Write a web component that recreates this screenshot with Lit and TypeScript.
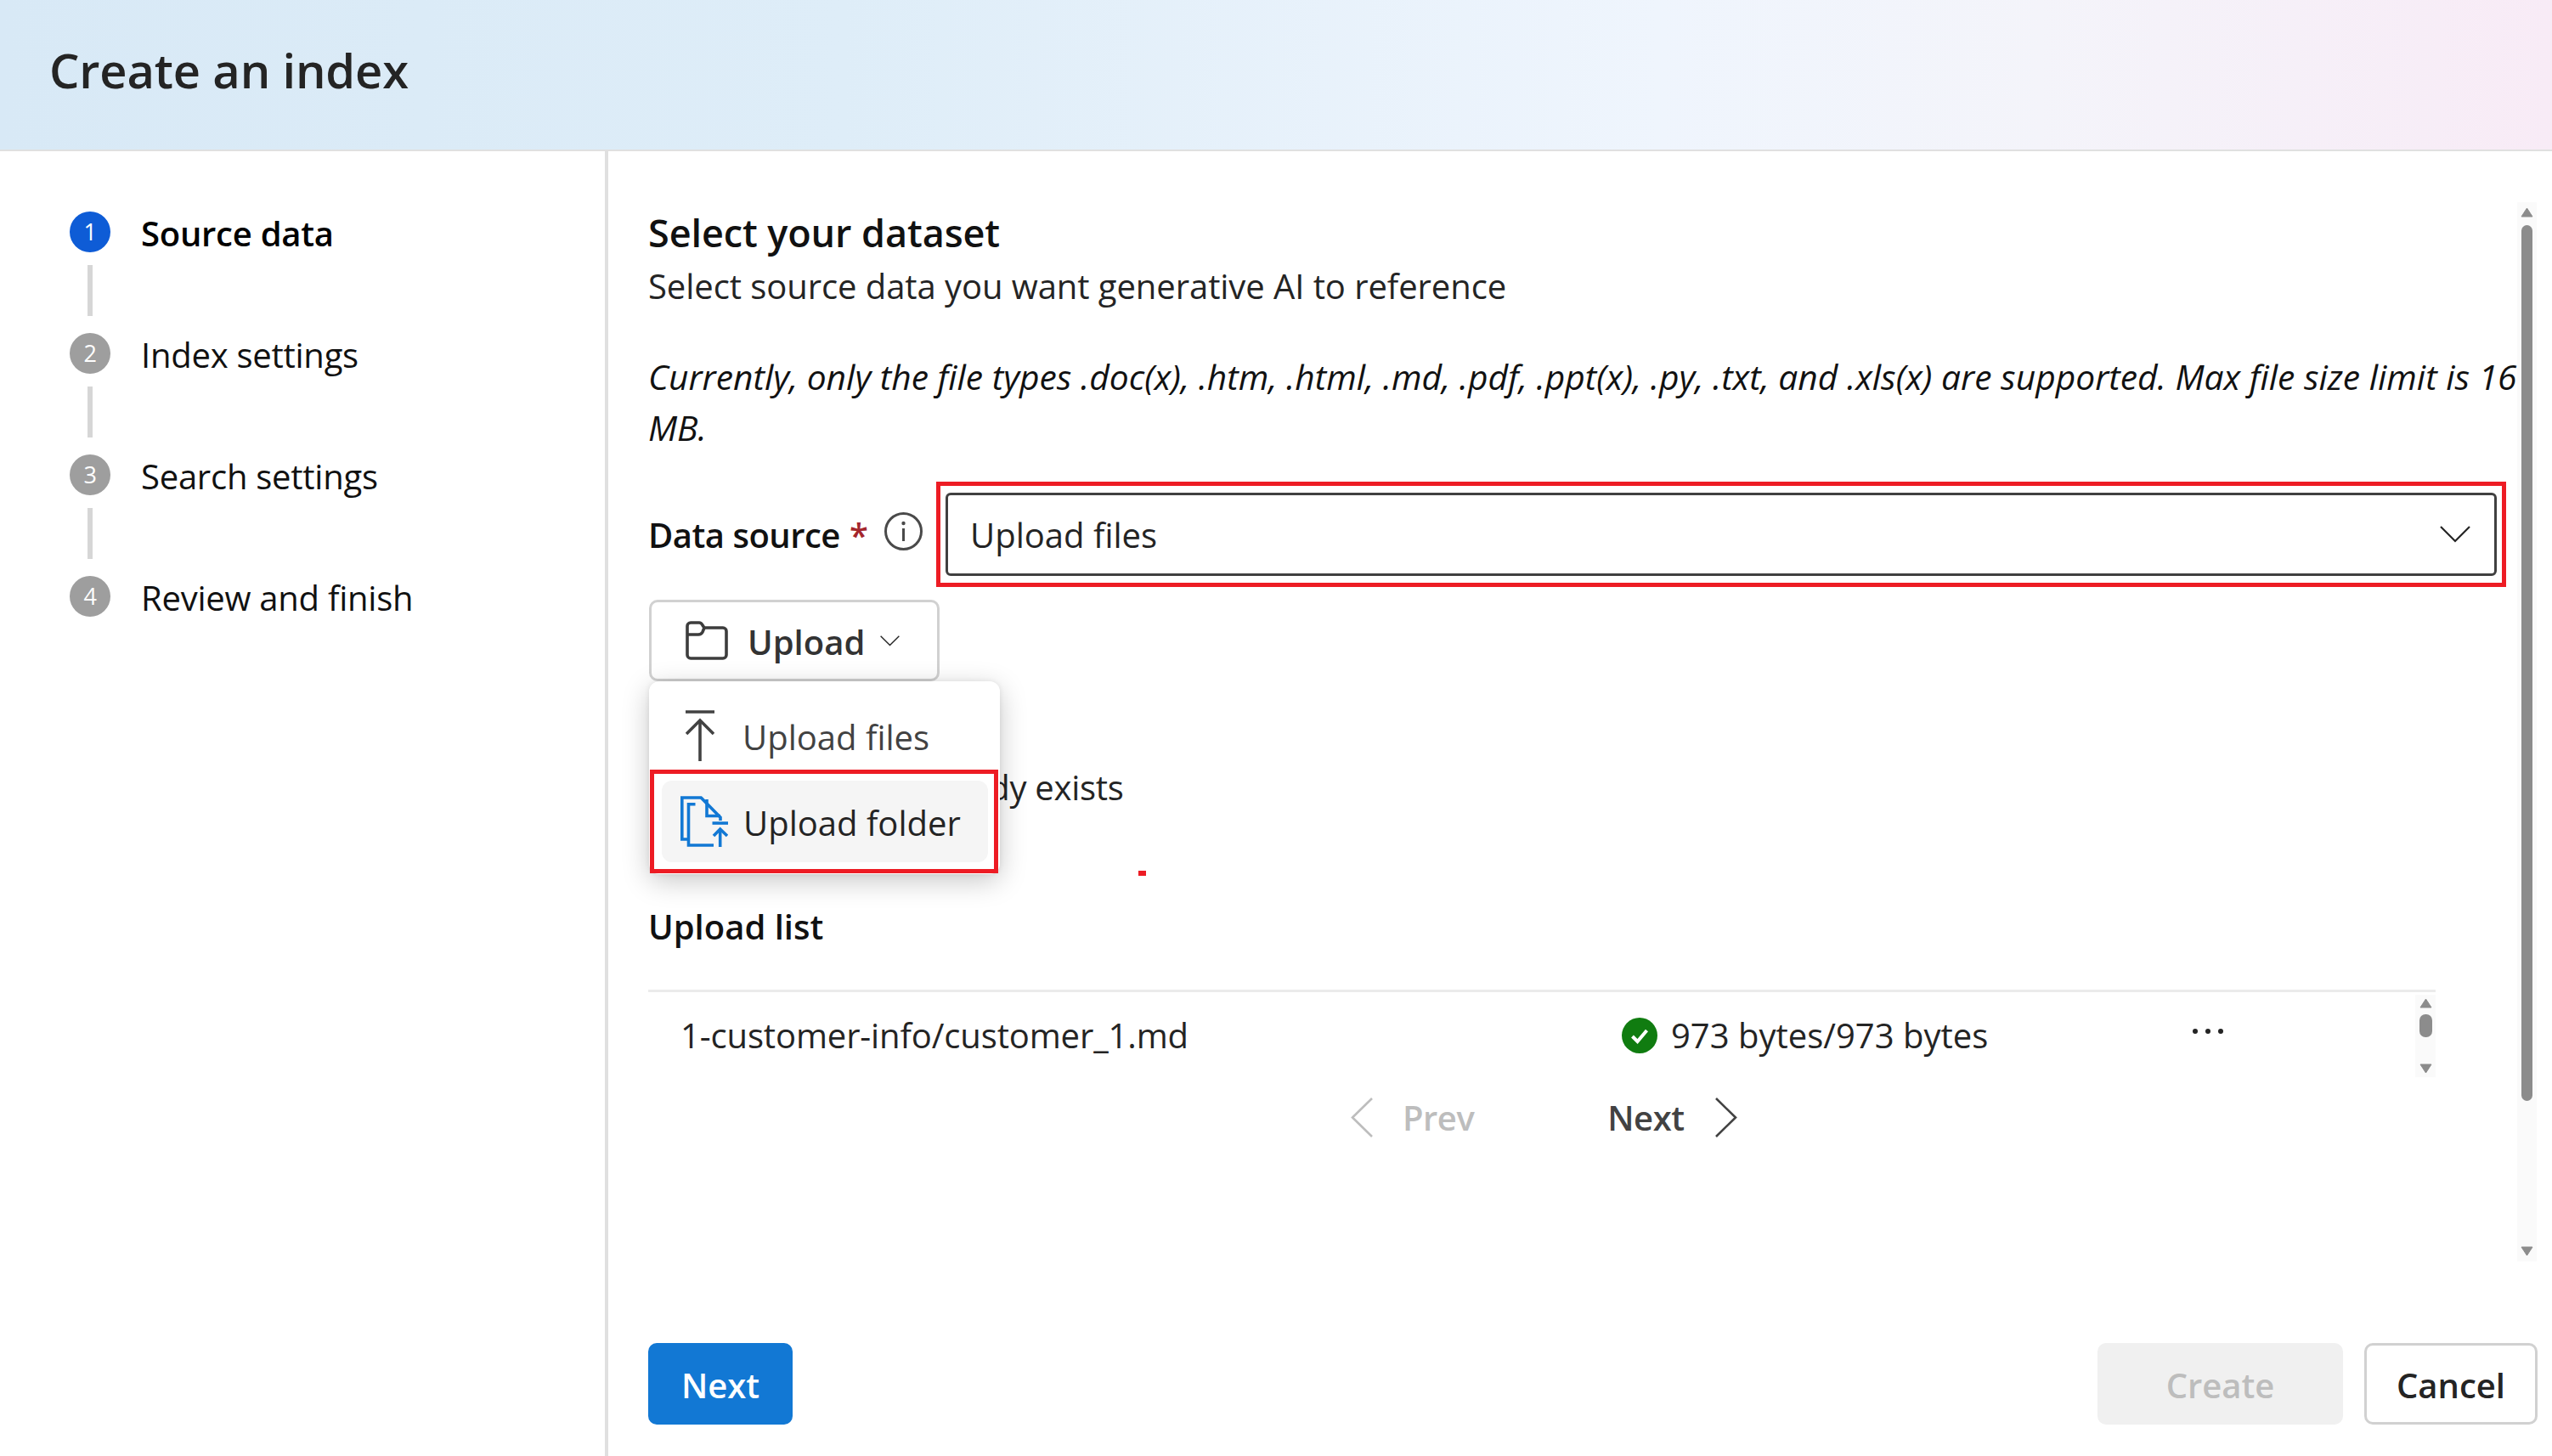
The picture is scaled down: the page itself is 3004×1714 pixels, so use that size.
import { LitElement, css, html, svg } from "lit";
import { customElement } from "lit/decorators.js";

const STEPS = ["Source data", "Index settings", "Search settings", "Review and finish"];

const chevronDown = (w: number, h: number) => html`
  <svg width=${w} height=${h} viewBox="0 0 36 20" fill="none" stroke="#242424" stroke-width="2.2">
    <path d="M1 1l17 17L35 1" />
  </svg>
`;

const pagerChevron = (left: boolean, color: string) => html`
  <svg width="27" height="47" viewBox="0 0 27 47" fill="none" stroke=${color} stroke-width="2.6">
    <path d=${left ? "M25 1L2 23.5 25 46" : "M2 1l23 22.5L2 46"} />
  </svg>
`;

const folderIcon = html`
  <svg width="50" height="46" viewBox="0 0 50 46" fill="none" stroke="#3d3d3d" stroke-width="3.6">
    <path d="M2 8V6a4 4 0 0 1 4-4h10c2 0 3 1 4 3l2 3h22a4 4 0 0 1 4 4v28a4 4 0 0 1-4 4H6a4 4 0 0 1-4-4V8z" />
    <path d="M2 16h13c3 0 4-1 5-3l2-5" />
  </svg>
`;

const uploadFilesIcon = html`
  <svg width="34" height="60" viewBox="0 0 34 60" fill="none" stroke="#424242" stroke-width="3.6">
    <path d="M0 2h34" />
    <path d="M17 60V13" />
    <path d="M1 28l16-16 16 16" />
  </svg>
`;

const uploadFolderIcon = html`
  <svg width="56" height="60" viewBox="0 0 56 60" fill="none" stroke="#1278d4" stroke-width="3.6">
    <path d="M9.5 51H1.8V2H25" />
    <path d="M17.5 9.7H9.5V58H39" />
    <path d="M24 1.8l23 23.4V29" />
    <path d="M31 4v19.5h16" />
    <path d="M37.5 32H56" />
    <path d="M46.7 60V39" />
    <path d="M39 47l7.7-8 8.3 8" />
  </svg>
`;

const infoIcon = html`
  <svg width="45" height="45" viewBox="0 0 45 45">
    <circle cx="22.5" cy="22.5" r="21" fill="none" stroke="#4a4a4a" stroke-width="3" />
    <rect x="21" y="19" width="3" height="15" fill="#4a4a4a" />
    <circle cx="22.5" cy="13" r="2.2" fill="#4a4a4a" />
  </svg>
`;

const checkIcon = html`
  <svg width="42" height="42" viewBox="0 0 42 42">
    <circle cx="21" cy="21" r="21" fill="#107c10" />
    <path d="M12.5 22l6 6 11-13" fill="none" stroke="#fff" stroke-width="4" />
  </svg>
`;

const scrollArrow = (down: boolean) => svg`
  <path d=${down ? "M1 1h13L7.5 11z" : "M1 11h13L7.5 1z"} fill="#8c8c8c" stroke="#8c8c8c" stroke-linejoin="round" />
`;

@customElement("app-root")
export class AppRoot extends LitElement {
  static styles = css`
    :host {
      display: block;
      width: 3004px;
      height: 1714px;
      overflow: hidden;
      background: #fff;
      font-family: "Open Sans", "Noto Sans", sans-serif;
      font-size: 40px;
      line-height: 56px;
      color: #242424;
    }
    .header {
      height: 176px;
      display: flex;
      align-items: center;
      padding: 0 0 13px 58px;
      box-sizing: border-box;
      background: linear-gradient(90deg, #d8e9f6 0%, #deedf8 33%, #eff5fd 65%, #f4f4fa 80%, #f8ebf6 100%);
      font-size: 56px;
      font-weight: 600;
      letter-spacing: -0.15px;
    }
    .shell {
      display: flex;
      border-top: 2px solid #e0e0e0;
      height: 1536px;
    }
    .steps {
      flex: none;
      width: 630px;
      padding: 71px 0 0 82px;
      border-right: 4px solid #e0e0e0;
      color: #111;
      letter-spacing: -0.25px;
    }
    .step {
      display: flex;
      align-items: center;
      gap: 36px;
      height: 48px;
    }
    .step .label-text {
      padding-top: 4px;
    }
    .step.active {
      font-weight: 600;
      color: #000;
    }
    .num {
      width: 48px;
      height: 48px;
      border-radius: 50%;
      background: #9e9e9e;
      color: #fff;
      font-size: 27px;
      font-weight: 400;
      display: flex;
      align-items: center;
      justify-content: center;
      flex: none;
    }
    .step.active .num {
      background: #0e5cd6;
    }
    .line {
      width: 6px;
      height: 60px;
      margin: 15px 0 20px 21px;
      background: #d6d6d6;
    }
    .main {
      flex: 1;
      min-width: 0;
      padding-top: 60px;
      display: flex;
      flex-direction: column;
    }
    .scroll {
      display: flex;
      height: 1247px;
      padding-left: 47px;
    }
    .form {
      width: 2200px;
      flex: none;
      padding-top: 8px;
    }
    .title {
      font-size: 45px;
      font-weight: 600;
      color: #111;
      letter-spacing: -0.1px;
    }
    .sub {
      margin-top: 7px;
      letter-spacing: -0.07px;
    }
    .note {
      margin-top: 48px;
      line-height: 60px;
      font-size: 40.78px;
      font-style: italic;
      color: #111;
    }
    .field {
      margin-top: 34px;
      display: flex;
      align-items: center;
      width: 2187px;
    }
    .label {
      font-weight: 600;
      color: #111;
      white-space: nowrap;
      width: 339px;
      flex: none;
      display: flex;
      align-items: center;
      letter-spacing: -0.5px;
      padding-top: 2px;
      box-sizing: border-box;
    }
    .req {
      color: #a4262c;
      margin: 0 20px 0 11px;
    }
    .info {
      display: flex;
      margin-top: -10px;
    }
    .mark {
      border: 5px solid #ed1c24;
      box-sizing: border-box;
    }
    .select-mark {
      flex: 1;
      height: 124px;
      padding: 8px 6px;
      display: flex;
    }
    .select {
      flex: 1;
      box-sizing: border-box;
      border: 3px solid #404040;
      border-radius: 6px;
      display: flex;
      align-items: center;
      justify-content: space-between;
      padding: 0 28px 0 26px;
    }
    .select span {
      padding-top: 2px;
    }
    .upload-wrap {
      position: relative;
      margin: 15px 0 0 1px;
      width: 342px;
      height: 96px;
    }
    .upload {
      box-sizing: border-box;
      height: 96px;
      border: 3px solid #d1d1d1;
      border-radius: 10px;
      display: flex;
      align-items: center;
      padding-left: 40px;
      font-weight: 600;
      color: #333;
    }
    .upload .text {
      margin: 0 18px 0 23px;
      padding-top: 4px;
    }
    .menu {
      position: absolute;
      left: 0;
      top: 96px;
      width: 413px;
      height: 227px;
      background: #fff;
      border-radius: 12px;
      box-shadow: 0 8px 32px rgba(0, 0, 0, 0.22), 0 0 6px rgba(0, 0, 0, 0.08);
      z-index: 2;
    }
    .item {
      display: flex;
      align-items: center;
      color: #424242;
    }
    .item span {
      padding-top: 4px;
    }
    .item.files {
      height: 80px;
      padding: 24px 0 0 43px;
      gap: 33px;
    }
    .folder-mark {
      box-sizing: border-box;
      width: 410px;
      height: 122px;
      margin-left: 1px;
      padding: 8px 7px 8px 9px;
    }
    .item.folder {
      height: 96px;
      background: #f5f5f5;
      border-radius: 12px;
      padding-left: 22px;
      gap: 18px;
      color: #242424;
    }
    .overwrite {
      margin: 97px 0 0 1px;
      white-space: nowrap;
      padding-left: 84px;
      letter-spacing: -0.3px;
    }
    .dot {
      position: absolute;
      left: 1340px;
      top: 1025px;
      width: 9px;
      height: 6px;
      background: #ed1c24;
    }
    .list-title {
      margin-top: 108px;
      font-weight: 600;
      color: #111;
    }
    .table {
      margin-top: 46px;
      width: 2104px;
      border-top: 3px solid #ebebeb;
    }
    .row {
      height: 102px;
      display: flex;
      align-items: center;
      padding-left: 38px;
    }
    .name {
      width: 1108px;
      flex: none;
      letter-spacing: -0.13px;
    }
    .status {
      width: 672px;
      flex: none;
      display: flex;
      align-items: center;
      gap: 16px;
    }
    .dots {
      display: flex;
      gap: 9px;
      margin-top: -10px;
    }
    .dots i {
      width: 6px;
      height: 6px;
      border-radius: 50%;
      background: #242424;
    }
    .mini-bar {
      margin-left: auto;
      width: 24px;
      height: 97px;
      background: #fafafa;
    }
    .pager {
      height: 90px;
      display: flex;
      align-items: center;
      padding-left: 827px;
      font-weight: 600;
      color: #424242;
      letter-spacing: -0.5px;
    }
    .pager span {
      padding-top: 2px;
    }
    .prev {
      color: #bdbdbd;
      margin: 0 157px 0 34px;
    }
    .next {
      margin-right: 35px;
    }
    .bar {
      width: 23px;
      flex: none;
      background: #fafafa;
      display: flex;
      flex-direction: column;
      align-items: center;
    }
    .bar svg {
      flex: none;
    }
    .bar svg.up {
      margin-top: 6px;
    }
    .bar svg.down {
      margin-bottom: 6px;
    }
    .thumb {
      width: 13px;
      height: 1031px;
      border-radius: 7px;
      background: #8c8c8c;
      margin-top: 9px;
    }
    .bar .gap {
      flex: 1;
    }
    .footer {
      margin-top: 96px;
      padding: 0 17px 0 47px;
      display: flex;
      align-items: center;
      gap: 25px;
      font-weight: 600;
    }
    .btn {
      box-sizing: border-box;
      height: 96px;
      padding-top: 3px;
      border-radius: 10px;
      display: flex;
      align-items: center;
      justify-content: center;
    }
    .btn.primary {
      width: 170px;
      background: #1278d4;
      color: #fff;
      margin-right: auto;
    }
    .btn.off {
      width: 289px;
      background: #f0f0f0;
      color: #bdbdbd;
    }
    .btn.plain {
      width: 204px;
      border: 3px solid #d1d1d1;
      color: #242424;
    }
  `;

  render() {
    return html`
      <div class="header">Create an index</div>
      <div class="shell">
        <div class="steps">
          ${STEPS.map(
            (label, i) => html`
              ${i > 0 ? html`<div class="line"></div>` : null}
              <div class="step ${i === 0 ? "active" : ""}">
                <span class="num">${i + 1}</span>
                <span class="label-text">${label}</span>
              </div>
            `,
          )}
        </div>
        <div class="main">
          <div class="scroll">
            <div class="form">
              <div class="title">Select your dataset</div>
              <div class="sub">Select source data you want generative AI to reference</div>
              <div class="note">
                Currently, only the file types .doc(x), .htm, .html, .md, .pdf, .ppt(x), .py, .txt,
                and .xls(x) are supported. Max file size limit is 16 MB.
              </div>
              <div class="field">
                <div class="label">
                  Data source<span class="req">*</span><span class="info">${infoIcon}</span>
                </div>
                <div class="mark select-mark">
                  <div class="select">
                    <span>Upload files</span>
                    ${chevronDown(36, 20)}
                  </div>
                </div>
              </div>
              <div class="upload-wrap">
                <div class="upload">
                  ${folderIcon}
                  <span class="text">Upload</span>
                  ${chevronDown(23, 13)}
                </div>
                <div class="menu">
                  <div class="item files">${uploadFilesIcon}<span>Upload files</span></div>
                  <div class="mark folder-mark">
                    <div class="item folder">${uploadFolderIcon}<span>Upload folder</span></div>
                  </div>
                </div>
              </div>
              <div class="overwrite">Overwrite if already exists</div>
              <div class="list-title">Upload list</div>
              <div class="table">
                <div class="row">
                  <span class="name">1-customer-info/customer_1.md</span>
                  <span class="status">${checkIcon}<span>973 bytes/973 bytes</span></span>
                  <span class="dots"><i></i><i></i><i></i></span>
                  <svg class="mini-bar" viewBox="0 0 24 97">
                    <g transform="translate(5 4)">${scrollArrow(false)}</g>
                    <rect x="5" y="23" width="15" height="27" rx="7" fill="#8c8c8c" />
                    <g transform="translate(5 81)">${scrollArrow(true)}</g>
                  </svg>
                </div>
              </div>
              <div class="pager">
                ${pagerChevron(true, "#bdbdbd")}
                <span class="prev">Prev</span>
                <span class="next">Next</span>
                ${pagerChevron(false, "#424242")}
              </div>
            </div>
            <div class="bar">
              <svg class="up" width="15" height="12" viewBox="0 0 15 12">${scrollArrow(false)}</svg>
              <div class="thumb"></div>
              <div class="gap"></div>
              <svg class="down" width="15" height="12" viewBox="0 0 15 12">${scrollArrow(true)}</svg>
            </div>
          </div>
          <div class="footer">
            <div class="btn primary">Next</div>
            <div class="btn off">Create</div>
            <div class="btn plain">Cancel</div>
          </div>
        </div>
      </div>
      <div class="dot"></div>
    `;
  }
}

declare global {
  interface HTMLElementTagNameMap {
    "app-root": AppRoot;
  }
}
